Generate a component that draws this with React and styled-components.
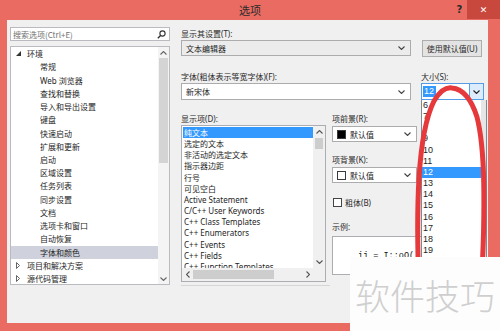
import React from 'react';
import styled, { createGlobalStyle } from 'styled-components';

const GlobalStyle = createGlobalStyle`
  html, body {
    margin: 0;
    padding: 0;
  }
  body {
    width: 500px;
    height: 331px;
    overflow: hidden;
    font-family: "Noto Sans", "Noto Sans CJK SC", sans-serif;
    color: #1e1e1e;
  }
`;

const treeItems = [
  { label: '环境', level: 0, arrow: 'open' },
  { label: '常规', level: 1 },
  { label: 'Web 浏览器', level: 1 },
  { label: '查找和替换', level: 1 },
  { label: '导入和导出设置', level: 1 },
  { label: '键盘', level: 1 },
  { label: '快速启动', level: 1 },
  { label: '扩展和更新', level: 1 },
  { label: '启动', level: 1 },
  { label: '区域设置', level: 1 },
  { label: '任务列表', level: 1 },
  { label: '同步设置', level: 1 },
  { label: '文档', level: 1 },
  { label: '选项卡和窗口', level: 1 },
  { label: '自动恢复', level: 1 },
  { label: '字体和颜色', level: 1, selected: true },
  { label: '项目和解决方案', level: 0, arrow: 'closed' },
  { label: '源代码管理', level: 0, arrow: 'closed' },
];

const displayItems = [
  '纯文本',
  '选定的文本',
  '非活动的选定文本',
  '指示器边距',
  '行号',
  '可见空白',
  'Active Statement',
  'C/C++ User Keywords',
  'C++ Class Templates',
  'C++ Enumerators',
  'C++ Events',
  'C++ Fields',
  'C++ Function Templates',
];

const sizes = ['6', '7', '8', '9', '10', '11', '12', '13', '14', '15', '16', '17', '18', '19'];

const Window = styled.div`
  position: relative;
  width: 500px;
  height: 331px;
  background: #e96b62;
  display: flex;
  flex-direction: column;
  overflow: hidden;
`;

const TitleBar = styled.div`
  height: 20px;
  display: grid;
  grid-template-columns: 1fr auto 1fr;
  align-items: center;
`;

const Title = styled.div`
  grid-column: 2;
  font-family: "Noto Sans CJK SC", sans-serif;
  font-size: 11px;
  line-height: 20px;
  color: #2a2a2a;
`;

const Controls = styled.div`
  justify-self: end;
  align-self: start;
  display: flex;
  height: 19px;
`;

const CaptionButton = styled.div`
  width: ${(p) => p.$w}px;
  height: 19px;
  display: flex;
  align-items: center;
  justify-content: center;
  background: ${(p) => (p.$close ? '#c9483e' : 'transparent')};
  color: ${(p) => (p.$close ? '#ffffff' : '#2a2a2a')};
  font-family: "DejaVu Sans", sans-serif;
  font-size: ${(p) => (p.$close ? 9 : 10)}px;
  font-weight: bold;
`;

const Client = styled.div`
  flex: 1;
  margin: 0 12px 8px 7px;
  background: #f0f0f0;
  display: flex;
  gap: 11px;
  padding: 7px 0 0 3px;
`;

const LeftPane = styled.div`
  width: 160px;
  display: flex;
  flex-direction: column;
  gap: 5px;
`;

const SearchBox = styled.div`
  box-sizing: border-box;
  height: 14px;
  border: 1px solid #b9bbc1;
  background: #ffffff;
  display: flex;
  align-items: center;
  justify-content: space-between;
  padding: 0 3px 0 2px;
  font-family: "Noto Sans CJK SC", sans-serif;
  font-size: 8px;
  color: #707070;
`;

const Tree = styled.div`
  box-sizing: border-box;
  height: 239px;
  border: 1px solid #b9bbc1;
  background: #ffffff;
  display: flex;
`;

const TreeList = styled.div`
  flex: 1;
  overflow: hidden;
`;

const TreeRow = styled.div`
  height: 13.24px;
  display: flex;
  align-items: center;
  padding-left: ${(p) => 5 + p.$level * 13}px;
  background: ${(p) => (p.$selected ? '#cfd2dc' : 'transparent')};
  font-family: "Noto Sans", "Noto Sans CJK SC", sans-serif;
  font-size: 8px;
  color: #1e1e1e;
  white-space: nowrap;
`;

const Expander = styled.span`
  width: 11px;
  display: flex;
  align-items: center;
`;

const VScroll = styled.div`
  width: 11px;
  display: flex;
  flex-direction: column;
  background: #f4f4f4;
`;

const ScrollArrow = styled.div`
  height: ${(p) => p.$size || 12}px;
  width: ${(p) => p.$size || 12}px;
  flex: none;
  display: flex;
  align-items: center;
  justify-content: center;
  ${(p) => p.$end && (p.$horizontal ? 'margin-left: auto;' : 'margin-top: auto;')}
`;

const TreeThumb = styled.div`
  height: 105px;
  margin: 0 1px;
  background: #d4d4d4;
`;

const RightPane = styled.div`
  flex: 1;
  display: flex;
  flex-direction: column;
`;

const Label = styled.div`
  height: 13px;
  line-height: 13px;
  font-family: "Noto Sans", "Noto Sans CJK SC", sans-serif;
  font-size: 8px;
  color: #2a2a2a;
  white-space: nowrap;
  margin-top: ${(p) => p.$mt || 0}px;
`;

const Row = styled.div`
  display: flex;
  align-items: flex-start;
  margin-top: ${(p) => p.$mt || 0}px;
`;

const FieldCol = styled.div`
  position: relative;
  display: flex;
  flex-direction: column;
  width: ${(p) => p.$w}px;
  margin-left: ${(p) => p.$ml || 0}px;
`;

const Select = styled.div`
  box-sizing: border-box;
  width: ${(p) => p.$w}px;
  height: ${(p) => p.$h || 16}px;
  margin-top: ${(p) => p.$mt || 0}px;
  border: 1px solid #acacac;
  background: ${(p) => (p.$flat ? '#ececec' : '#ffffff')};
  display: flex;
  align-items: center;
  padding: 0 5px 0 4px;
  gap: 4px;
  font-family: "Noto Sans", "Noto Sans CJK SC", sans-serif;
  font-size: 8px;
  color: #1e1e1e;
`;

const SelectText = styled.span`
  flex: 1;
  white-space: nowrap;
`;

const Swatch = styled.span`
  width: 9px;
  height: 9px;
  box-sizing: border-box;
  background: ${(p) => p.$color};
  border: 1px solid #3a3a3a;
`;

const Button = styled.div`
  box-sizing: border-box;
  width: 60px;
  height: 17px;
  margin-left: 11px;
  border: 1px solid #adadad;
  background: #e3e3e3;
  display: flex;
  align-items: center;
  justify-content: center;
  font-family: "Noto Sans", "Noto Sans CJK SC", sans-serif;
  font-size: 8px;
  color: #2a2a2a;
`;

const Combo = styled.div`
  box-sizing: border-box;
  width: 63px;
  height: 17px;
  border: 1px solid #569de5;
  background: #ffffff;
  display: flex;
  align-items: stretch;
`;

const ComboEdit = styled.div`
  flex: 1;
  display: flex;
  align-items: center;
  padding-left: 1px;
`;

const Highlight = styled.span`
  background: #3399ff;
  color: #ffffff;
  font-family: "Liberation Sans", sans-serif;
  font-size: 9px;
  line-height: 11px;
  padding: 0 2px 0 1px;
`;

const ComboButton = styled.div`
  width: 13px;
  border-left: 1px solid #569de5;
  background: #dcecfc;
  display: flex;
  align-items: center;
  justify-content: center;
`;

const Popup = styled.div`
  position: absolute;
  top: 30px;
  left: 0;
  width: 66px;
  height: 158px;
  box-sizing: border-box;
  border: 1px solid #828790;
  border-top: none;
  border-bottom: none;
  background: #ffffff;
  display: flex;
  z-index: 5;
`;

const PopupList = styled.div`
  flex: 1;
`;

const PopupItem = styled.div`
  height: 11.17px;
  line-height: 11.17px;
  padding-left: 1px;
  background: ${(p) => (p.$selected ? '#3399ff' : 'transparent')};
  color: ${(p) => (p.$selected ? '#ffffff' : '#1e1e1e')};
  visibility: ${(p) => (p.$hidden ? 'hidden' : 'visible')};
  font-family: "Liberation Sans", sans-serif;
  font-size: 9px;
`;

const PopupScroll = styled.div`
  width: 5px;
  background: #e6e6e6;
`;

const ListBox = styled.div`
  box-sizing: border-box;
  width: 145px;
  height: 157px;
  border: 1px solid #abadb3;
  background: #ffffff;
  display: grid;
  grid-template-columns: 1fr 12px;
  grid-template-rows: 1fr 13px;
`;

const ListItems = styled.div`
  overflow: hidden;
  padding-top: 1px;
`;

const ListItem = styled.div`
  height: 11.17px;
  line-height: 11.17px;
  padding-left: 1px;
  margin-left: 1px;
  background: ${(p) => (p.$selected ? '#3399ff' : 'transparent')};
  color: ${(p) => (p.$selected ? '#ffffff' : '#1e1e1e')};
  font-family: "Noto Sans", "Noto Sans CJK SC", sans-serif;
  font-size: 8px;
  white-space: nowrap;
`;

const ListVScroll = styled.div`
  display: flex;
  flex-direction: column;
  background: #f0f0f0;
`;

const ListThumb = styled.div`
  height: 11px;
  margin: 0 2px;
  background: #cdcdcd;
`;

const HScroll = styled.div`
  display: flex;
  align-items: center;
  background: #f0f0f0;
`;

const HThumb = styled.div`
  width: 81px;
  height: 9px;
  background: #cdcdcd;
`;

const Corner = styled.div`
  background: #f0f0f0;
`;

const Rule = styled.div`
  width: 149px;
  height: 1px;
  margin-top: 3px;
  background: #d6d6d6;
`;

const CheckRow = styled.div`
  height: 12px;
  margin-top: 13px;
  display: flex;
  align-items: center;
  gap: 3px;
  font-family: "Noto Sans", "Noto Sans CJK SC", sans-serif;
  font-size: 8px;
  color: #2a2a2a;
`;

const CheckBox = styled.span`
  width: 9px;
  height: 9px;
  box-sizing: border-box;
  margin-left: 1px;
  border: 1px solid #444;
  background: #ffffff;
`;

const SampleBox = styled.div`
  box-sizing: border-box;
  width: 152px;
  height: 39px;
  margin-top: 3px;
  border: 1px solid #abadb3;
  background: #ffffff;
  display: flex;
  align-items: center;
  padding-left: 25px;
  font-family: "Liberation Mono", monospace;
  font-size: 8.5px;
  color: #111;
  white-space: nowrap;
  overflow: hidden;
`;

const Annotation = styled.svg`
  position: absolute;
  left: 0;
  top: 0;
  pointer-events: none;
  z-index: 8;
`;

const Watermark = styled.div`
  position: absolute;
  left: 350px;
  top: 257px;
  right: 0;
  bottom: 0;
  background: #fdfdfd;
  display: flex;
  align-items: center;
  justify-content: center;
  font-family: "Noto Sans CJK SC", sans-serif;
  font-weight: 300;
  font-size: 35px;
  color: #cfcfcf;
  z-index: 10;
`;

const Chevron = ({ dir = 'down', color = '#444' }) => {
  const pts = {
    down: '0.5,0.5 3.5,3.5 6.5,0.5',
    up: '0.5,3.5 3.5,0.5 6.5,3.5',
    left: '3.5,0.5 0.5,3.5 3.5,6.5',
    right: '0.5,0.5 3.5,3.5 0.5,6.5',
  }[dir];
  const vertical = dir === 'down' || dir === 'up';
  return (
    <svg width={vertical ? 7 : 4} height={vertical ? 4 : 7} viewBox={vertical ? '0 0 7 4' : '0 0 4 7'}>
      <polyline points={pts} fill="none" stroke={color} strokeWidth="1.1" />
    </svg>
  );
};

const Magnifier = () => (
  <svg width="9" height="9" viewBox="0 0 9 9">
    <circle cx="5.5" cy="3.5" r="2.6" fill="none" stroke="#333" strokeWidth="1.1" />
    <line x1="3.6" y1="5.4" x2="0.8" y2="8.2" stroke="#333" strokeWidth="1.4" />
  </svg>
);

const TreeArrow = ({ type }) =>
  type === 'open' ? (
    <svg width="5" height="5" viewBox="0 0 5 5">
      <polygon points="5,0 5,5 0,5" fill="#333" />
    </svg>
  ) : (
    <svg width="4" height="7" viewBox="0 0 4 7">
      <polygon points="0.5,0.5 3.5,3.5 0.5,6.5" fill="none" stroke="#555" strokeWidth="0.9" />
    </svg>
  );

const App = () => {
  return (
    <>
      <GlobalStyle />
      <Window>
        <TitleBar>
          <Title>选项</Title>
          <Controls>
            <CaptionButton $w={15}>?</CaptionButton>
            <CaptionButton $w={33} $close>✕</CaptionButton>
          </Controls>
        </TitleBar>
        <Client>
          <LeftPane>
            <SearchBox>
              <span>搜索选项(Ctrl+E)</span>
              <Magnifier />
            </SearchBox>
            <Tree>
              <TreeList>
                {treeItems.map((item) => (
                  <TreeRow key={item.label} $level={item.level} $selected={item.selected}>
                    <Expander>{item.arrow && <TreeArrow type={item.arrow} />}</Expander>
                    {item.label}
                  </TreeRow>
                ))}
              </TreeList>
              <VScroll>
                <ScrollArrow $size={11}>
                  <Chevron dir="up" color="#666" />
                </ScrollArrow>
                <TreeThumb />
                <ScrollArrow $size={11} $end>
                  <Chevron dir="down" color="#666" />
                </ScrollArrow>
              </VScroll>
            </Tree>
          </LeftPane>

          <RightPane>
            <Label>显示其设置(T):</Label>
            <Row>
              <Select $w={230} $flat>
                <SelectText>文本编辑器</SelectText>
                <Chevron />
              </Select>
              <Button>使用默认值(U)</Button>
            </Row>

            <Row $mt={13}>
              <FieldCol $w={230}>
                <Label>字体(粗体表示等宽字体)(F):</Label>
                <Select $w={230} $h={17}>
                  <SelectText>新宋体</SelectText>
                  <Chevron />
                </Select>
              </FieldCol>
              <FieldCol $w={63} $ml={10}>
                <Label>大小(S):</Label>
                <Combo>
                  <ComboEdit>
                    <Highlight>12</Highlight>
                  </ComboEdit>
                  <ComboButton>
                    <Chevron color="#222" />
                  </ComboButton>
                </Combo>
                <Popup>
                  <PopupList>
                    {sizes.map((s) => (
                      <PopupItem key={s} $selected={s === '12'} $hidden={s === '8'}>
                        {s}
                      </PopupItem>
                    ))}
                  </PopupList>
                  <PopupScroll />
                </Popup>
              </FieldCol>
            </Row>

            <Row $mt={12}>
              <FieldCol $w={145}>
                <Label>显示项(D):</Label>
                <ListBox>
                  <ListItems>
                    {displayItems.map((d, i) => (
                      <ListItem key={d} $selected={i === 0}>
                        {d}
                      </ListItem>
                    ))}
                  </ListItems>
                  <ListVScroll>
                    <ScrollArrow>
                      <Chevron dir="up" color="#555" />
                    </ScrollArrow>
                    <ListThumb />
                    <ScrollArrow $end>
                      <Chevron dir="down" color="#555" />
                    </ScrollArrow>
                  </ListVScroll>
                  <HScroll>
                    <ScrollArrow $size={11}>
                      <Chevron dir="left" color="#555" />
                    </ScrollArrow>
                    <HThumb />
                    <ScrollArrow $size={11} $end $horizontal>
                      <Chevron dir="right" color="#555" />
                    </ScrollArrow>
                  </HScroll>
                  <Corner />
                </ListBox>
                <Rule />
              </FieldCol>
              <FieldCol $w={152} $ml={6}>
                <Label>项前景(R):</Label>
                <Select $w={85} $mt={1}>
                  <Swatch $color="#000000" />
                  <SelectText>默认值</SelectText>
                  <Chevron />
                </Select>
                <Label $mt={11}>项背景(K):</Label>
                <Select $w={85} $mt={1}>
                  <Swatch $color="#ffffff" />
                  <SelectText>默认值</SelectText>
                  <Chevron />
                </Select>
                <CheckRow>
                  <CheckBox />
                  粗体(B)
                </CheckRow>
                <Label $mt={12}>示例:</Label>
                <SampleBox>ij = I::oO(</SampleBox>
              </FieldCol>
            </Row>
          </RightPane>
        </Client>

        <Annotation width="500" height="331" viewBox="0 0 500 331">
          <path
            d="M 419 290 C 416 210, 417 135, 434 101 C 440 91, 446 87, 452 88 C 462 89, 471 98, 477 117 C 485 148, 486 205, 481 290"
            fill="none"
            stroke="#e5393b"
            strokeWidth="5"
            strokeLinecap="round"
          />
        </Annotation>
        <Watermark>软件技巧</Watermark>
      </Window>
    </>
  );
};

export default App;
